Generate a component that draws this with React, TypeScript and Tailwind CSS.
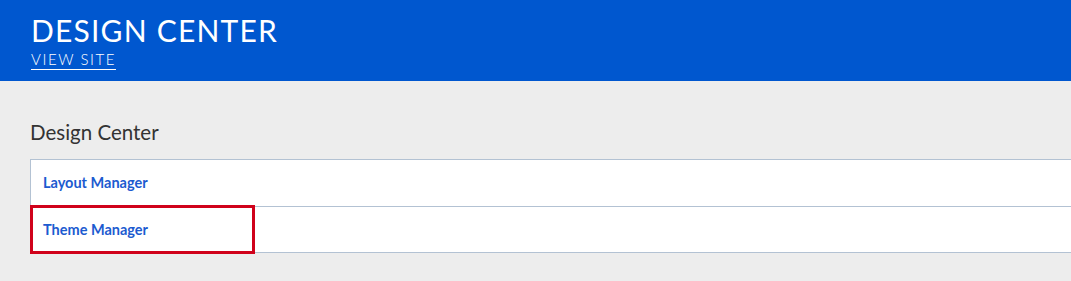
export default function App() {
  const links = ['Layout Manager', 'Theme Manager'];

  return (
    <div className="min-h-[281px] bg-[#ededed] font-['Lato','Liberation_Sans',sans-serif]">
      <header className="h-[81px] bg-[#0057cf] px-[31px] pt-[13px]">
        <h1 className="text-[30px] font-normal leading-[34px] tracking-[1.2px] text-white">DESIGN CENTER</h1>
        <a
          href="#"
          className="inline-block border-b border-white pb-[1px] text-[15px] font-light leading-[18px] tracking-[1.6px] text-white"
        >
          VIEW SITE
        </a>
      </header>

      <main className="pl-[30px] pt-[37px]">
        <h2 className="mb-[13px] text-[20.5px] leading-[28px] text-[#333]">Design Center</h2>
        <ul className="border-y border-l border-[#b3c2d3] bg-white">
          {links.map((label, i) => (
            <li
              key={label}
              className={`relative flex h-[46px] items-center px-[12px] ${i > 0 ? 'border-t border-[#b3c2d3]' : ''}`}
            >
              <a href="#" className="text-[14.5px] font-bold text-[#1c5bd0]">
                {label}
              </a>
              {label === 'Theme Manager' && (
                <span className="pointer-events-none absolute left-[-1px] top-[-2px] h-[49px] w-[225px] border-[3px] border-[#d0021b]" />
              )}
            </li>
          ))}
        </ul>
      </main>
    </div>
  );
}
